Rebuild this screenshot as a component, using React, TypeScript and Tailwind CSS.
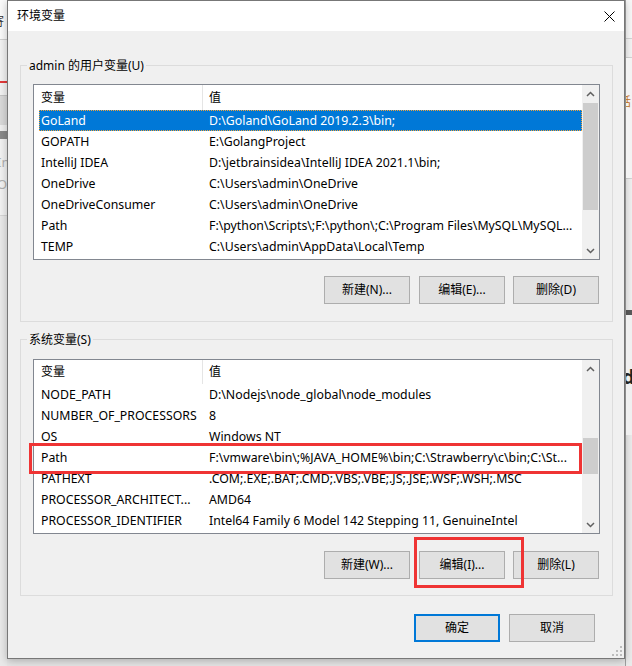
import React from "react";

type Row = [string, string];

const userRows: Row[] = [
  ["GoLand", "D:\\Goland\\GoLand 2019.2.3\\bin;"],
  ["GOPATH", "E:\\GolangProject"],
  ["IntelliJ IDEA", "D:\\jetbrainsidea\\IntelliJ IDEA 2021.1\\bin;"],
  ["OneDrive", "C:\\Users\\admin\\OneDrive"],
  ["OneDriveConsumer", "C:\\Users\\admin\\OneDrive"],
  ["Path", "F:\\python\\Scripts\\;F:\\python\\;C:\\Program Files\\MySQL\\MySQL..."],
  ["TEMP", "C:\\Users\\admin\\AppData\\Local\\Temp"],
];

const sysRows: Row[] = [
  ["NODE_PATH", "D:\\Nodejs\\node_global\\node_modules"],
  ["NUMBER_OF_PROCESSORS", "8"],
  ["OS", "Windows NT"],
  ["Path", "F:\\vmware\\bin\\;%JAVA_HOME%\\bin;C:\\Strawberry\\c\\bin;C:\\St..."],
  ["PATHEXT", ".COM;.EXE;.BAT;.CMD;.VBS;.VBE;.JS;.JSE;.WSF;.WSH;.MSC"],
  ["PROCESSOR_ARCHITECT...", "AMD64"],
  ["PROCESSOR_IDENTIFIER", "Intel64 Family 6 Model 142 Stepping 11, GenuineIntel"],
];

const Chevron = ({ up }: { up?: boolean }) => (
  <svg width="9" height="6" viewBox="0 0 9 6" className="block">
    <polyline
      points={up ? "1,5 4.5,1.5 8,5" : "1,1 4.5,4.5 8,1"}
      fill="none"
      stroke="#606060"
      strokeWidth="1.5"
    />
  </svg>
);

function Btn({ label, primary }: { label: string; primary?: boolean }) {
  return (
    <div
      className={
        primary
          ? "w-[86px] h-[28px] border-2 border-[#0078d7] bg-[#e1e1e1] flex items-center justify-center text-[12px] text-black"
          : "w-[86px] h-[28px] border border-[#adadad] bg-[#e1e1e1] flex items-center justify-center text-[12px] text-black"
      }
    >
      {label}
    </div>
  );
}

function VarList({
  rows,
  selected,
  heightCls,
  headerCls,
  thumbCls,
}: {
  rows: Row[];
  selected?: number;
  heightCls: string;
  headerCls: string;
  thumbCls: string;
}) {
  return (
    <div className={"flex border border-[#828790] bg-white " + heightCls}>
      <div className="flex-1 flex flex-col min-w-0">
        <div className={"flex items-stretch shrink-0 text-[12px] text-black " + headerCls}>
          <div className="w-[168px] pl-[7px] flex items-center">变量</div>
          <div className="w-px bg-[#e5e5e5]" />
          <div className="pl-[6px] flex items-center">值</div>
        </div>
        {rows.map(([n, v], i) => (
          <div
            key={i}
            className={
              i === selected
                ? "h-[21px] shrink-0 ml-[5px] pt-px flex items-center bg-[#0078d7] text-white border border-dotted border-[#f2a33a] text-[12.3px]"
                : "h-[21px] shrink-0 ml-[5px] pt-px flex items-center text-black text-[12.3px] border border-transparent"
            }
          >
            <div className="w-[162px] pl-[1px] whitespace-nowrap overflow-hidden">{n}</div>
            <div className="pl-[7px] whitespace-nowrap overflow-hidden">{v}</div>
          </div>
        ))}
      </div>
      <div className="w-[17px] bg-[#f0f0f0] flex flex-col shrink-0">
        <div className="h-[17px] flex items-center justify-center shrink-0">
          <Chevron up />
        </div>
        <div className="flex-1 flex flex-col">
          <div className={"mx-px bg-[#cdcdcd] " + thumbCls} />
        </div>
        <div className="h-[17px] flex items-center justify-center shrink-0">
          <Chevron />
        </div>
      </div>
    </div>
  );
}

function Group({
  title,
  children,
  cls,
}: {
  title: string;
  children: React.ReactNode;
  cls: string;
}) {
  return (
    <div className={"relative border border-[#dcdcdc] px-[12px] " + cls}>
      <div className="absolute left-[6px] top-[-9px] px-[2px] bg-[#f0f0f0] text-[12px] leading-[17px] text-black">
        {title}
      </div>
      {children}
    </div>
  );
}

export default function App() {
  return (
    <div className="w-[632px] h-[666px] overflow-hidden flex bg-[#eeeeee] font-['Noto_Sans','Noto_Sans_CJK_SC',sans-serif]">
      {/* left background strip */}
      <div className="w-[7px] shrink-0 flex flex-col overflow-hidden" aria-hidden="true">
        <div className="h-[39px] bg-[#fafafa] overflow-hidden relative">
          <div className="absolute left-[-8px] top-[13px] text-[12px] text-[#333]">寄</div>
        </div>
        <div className="h-px bg-[#d0d0d0]" />
        <div className="h-[41px] bg-[#f2f2f2]" />
        <div className="h-[2px] bg-[#e23a3a]" />
        <div className="h-[12px] bg-[#f2f2f2]" />
        <div className="h-[30px] bg-[#d9d9d9] border-t border-[#c4c4c4]" />
        <div className="h-[6px] bg-[#efefef]" />
        <div className="h-[8px] bg-[#8a8a8a]" />
        <div className="h-[76px] bg-[#f2f2f2] overflow-hidden relative">
          <div className="absolute left-[-3px] top-[14px] text-[13px] text-[#b0b0b0]">In</div>
          <div className="absolute left-[-3px] top-[36px] text-[13px] text-[#b0b0b0]">O</div>
        </div>
        <div className="h-px bg-[#d6d6d6]" />
        <div className="flex-1 bg-[#e9e9e9]" />
      </div>

      {/* dialog column */}
      <div className="w-[618px] shrink-0 flex flex-col">
        <div className="relative h-[659px] border border-[#777777] bg-[#f0f0f0] flex flex-col shadow-[0_2px_8px_rgba(0,0,0,0.25)]">
          {/* title bar */}
          <div className="h-[30px] bg-white flex items-center justify-between pl-[9px] pr-[9px] shrink-0">
            <span className="text-[12px] text-black">环境变量</span>
            <svg width="11" height="11" viewBox="0 0 11 11">
              <path d="M0.5 0.5 L10.5 10.5 M10.5 0.5 L0.5 10.5" stroke="#000" strokeWidth="1" />
            </svg>
          </div>

          <div className="flex flex-col pl-[12px] pr-[11px]">
            <Group title="admin 的用户变量(U)" cls="mt-[34px] pt-[18px] pb-[17px]">
              <VarList
                rows={userRows}
                selected={0}
                heightCls="h-[176px]"
                headerCls="h-[25px]"
                thumbCls="mt-px h-[107px]"
              />
              <div className="mt-[16px] flex justify-end pr-px">
                <Btn label="新建(N)..." />
                <div className="w-[9px]" />
                <Btn label="编辑(E)..." />
                <div className="w-[8px]" />
                <Btn label="删除(D)" />
              </div>
            </Group>

            <Group title="系统变量(S)" cls="mt-[17px] pt-[19px] pb-[16px]">
              <VarList
                rows={sysRows}
                heightCls="h-[175px]"
                headerCls="h-[24px]"
                thumbCls="mt-[61px] h-[36px]"
              />
              <div className="mt-[17px] flex justify-end pr-px">
                <Btn label="新建(W)..." />
                <div className="w-[9px]" />
                <Btn label="编辑(I)..." />
                <div className="w-[8px]" />
                <Btn label="删除(L)" />
              </div>
            </Group>

            <div className="mt-[18px] flex justify-end pr-[18px] gap-[9px]">
              <Btn label="确定" primary />
              <Btn label="取消" />
            </div>
          </div>

          {/* annotation boxes */}
          <div className="absolute left-[21px] top-[442px] w-[553px] h-[31px] border-[3px] border-[#ef3434]" />
          <div className="absolute left-[406px] top-[536px] w-[110px] h-[51px] border-[3px] border-[#ef3434]" />

          {/* resize grip */}
          <svg className="absolute right-[1px] bottom-[1px]" width="11" height="11" viewBox="0 0 11 11">
            <rect x="8" y="0" width="2" height="2" fill="#bcbcbc" />
            <rect x="4" y="4" width="2" height="2" fill="#bcbcbc" />
            <rect x="8" y="4" width="2" height="2" fill="#bcbcbc" />
            <rect x="0" y="8" width="2" height="2" fill="#bcbcbc" />
            <rect x="4" y="8" width="2" height="2" fill="#bcbcbc" />
            <rect x="8" y="8" width="2" height="2" fill="#bcbcbc" />
          </svg>
        </div>
        <div className="flex-1 bg-[#e6e6e6]" />
      </div>

      {/* right background strip */}
      <div className="flex-1 flex flex-col overflow-hidden border-l border-[#a0a0a0]" aria-hidden="true">
        <div className="h-[38px] bg-[#f7f7f7]" />
        <div className="h-px bg-[#d4d4d4]" />
        <div className="h-[18px] bg-[#f3f3f3]" />
        <div className="h-px bg-[#d4d4d4]" />
        <div className="h-[120px] bg-[#f3f3f3] relative overflow-hidden">
          <div className="absolute left-[-7px] top-[35px] text-[12px] text-[#c07020]">話</div>
        </div>
        <div className="h-px bg-[#d4d4d4]" />
        <div className="h-[131px] bg-[#f0f0f0]" />
        <div className="h-[5px] bg-[#5a5a5a]" />
        <div className="h-[120px] bg-[#f0f0f0] relative overflow-hidden">
          <div className="absolute left-[-4px] top-[52px] text-[20px] font-bold leading-none text-[#222]">d</div>
        </div>
        <div className="flex-1 bg-[#ebebeb]" />
      </div>
    </div>
  );
}
